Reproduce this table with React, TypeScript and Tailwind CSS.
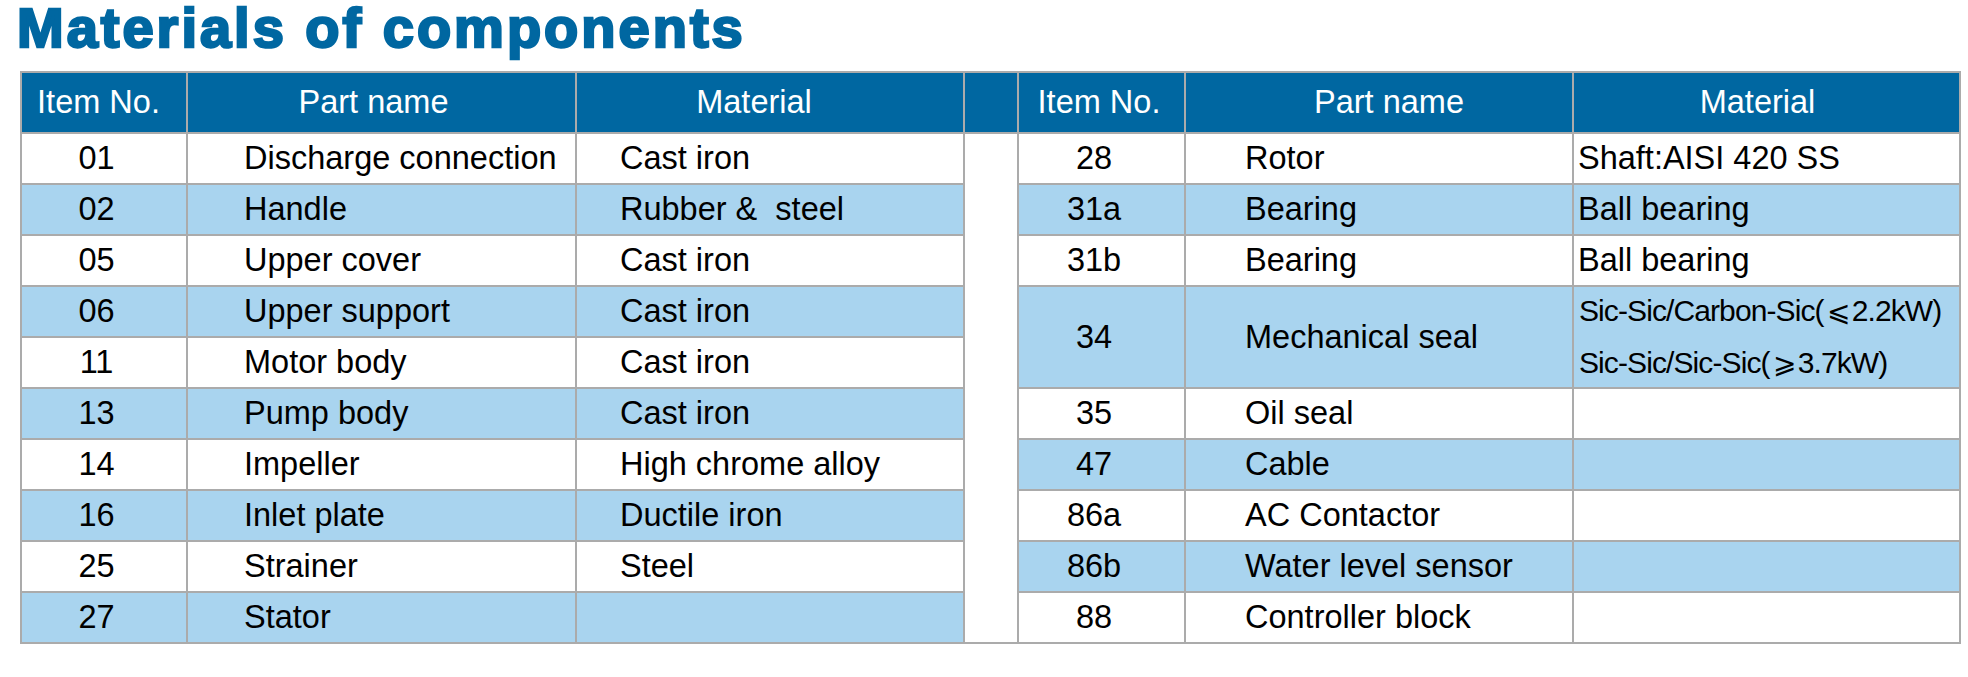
import React from 'react';

type Row = { no: string; part: string; material: string };

const leftRows: Row[] = [
  { no: '01', part: 'Discharge connection', material: 'Cast iron' },
  { no: '02', part: 'Handle', material: 'Rubber &\u00a0 steel' },
  { no: '05', part: 'Upper cover', material: 'Cast iron' },
  { no: '06', part: 'Upper support', material: 'Cast iron' },
  { no: '11', part: 'Motor body', material: 'Cast iron' },
  { no: '13', part: 'Pump body', material: 'Cast iron' },
  { no: '14', part: 'Impeller', material: 'High chrome alloy' },
  { no: '16', part: 'Inlet plate', material: 'Ductile iron' },
  { no: '25', part: 'Strainer', material: 'Steel' },
  { no: '27', part: 'Stator', material: '' },
];

// right side rows, indexed by the left row they start on; 34 spans two rows
const rightRows: (Row | null)[] = [
  { no: '28', part: 'Rotor', material: 'Shaft:AISI 420 SS' },
  { no: '31a', part: 'Bearing', material: 'Ball bearing' },
  { no: '31b', part: 'Bearing', material: 'Ball bearing' },
  { no: '34', part: 'Mechanical seal', material: 'seal' },
  null,
  { no: '35', part: 'Oil seal', material: '' },
  { no: '47', part: 'Cable', material: '' },
  { no: '86a', part: 'AC Contactor', material: '' },
  { no: '86b', part: 'Water level sensor', material: '' },
  { no: '88', part: 'Controller block', material: '' },
];

const head = 'bg-[#0067a1] text-white flex items-center justify-center';

export default function App() {
  return (
    <div className="min-h-screen bg-white font-['Liberation_Sans',Arial,sans-serif]">
      <h1 className="pl-[17px] text-[56px] leading-[56px] font-bold tracking-[3px] text-[#0067a1] [-webkit-text-stroke:2.5px_#0067a1]">
        Materials of components
      </h1>

      <div className="ml-[20px] mt-[15px] grid w-fit grid-cols-[164px_387px_386px_52px_165px_386px_385px] grid-rows-[59px_repeat(10,49px)] gap-[2px] bg-[#ababab] p-[2px] text-[32.5px] text-black">
        {/* Header */}
        <div className={`${head} pr-[11px]`}>Item No.</div>
        <div className={`${head} pr-[16px]`}>Part name</div>
        <div className={`${head} pr-[32px]`}>Material</div>
        <div className="bg-[#0067a1]" />
        <div className={`${head} pr-[5px]`}>Item No.</div>
        <div className={`${head} pl-[20px]`}>Part name</div>
        <div className={`${head} pr-[18px]`}>Material</div>

        {/* Spacer between the two halves */}
        <div className="col-start-4 row-start-2 row-span-10 bg-white" />

        {leftRows.map((row, i) => {
          const bg = i % 2 === 0 ? 'bg-white' : 'bg-[#a9d4ef]';
          const right = rightRows[i];
          const rbg = i < 4 ? bg : i % 2 === 0 ? 'bg-[#a9d4ef]' : 'bg-white';
          const seal = right?.no === '34';
          const span = seal ? 'row-span-2' : '';
          return (
            <React.Fragment key={row.no}>
              <div className={`${bg} flex items-center justify-center pr-[15px]`}>{row.no}</div>
              <div className={`${bg} flex items-center pl-[56px] whitespace-nowrap`}>{row.part}</div>
              <div className={`${bg} flex items-center pl-[43px] whitespace-nowrap`}>{row.material}</div>
              {right && (
                <>
                  <div className={`${rbg} ${span} flex items-center justify-center pr-[15px]`}>{right.no}</div>
                  <div className={`${rbg} ${span} flex items-center pl-[59px] whitespace-nowrap`}>{right.part}</div>
                  {seal ? (
                    <div className={`${rbg} ${span} flex flex-col justify-center pl-[5px] text-[30px] leading-[51px] tracking-[-0.9px] whitespace-nowrap`}>
                      <div>Sic-Sic/Carbon-Sic(<span className="mx-[3px] text-[28px]">⩽</span>2.2kW)</div>
                      <div>Sic-Sic/Sic-Sic(<span className="mx-[3px] text-[28px]">⩾</span>3.7kW)</div>
                    </div>
                  ) : (
                    <div className={`${rbg} flex items-center pl-[4px] whitespace-nowrap`}>{right.material}</div>
                  )}
                </>
              )}
            </React.Fragment>
          );
        })}
      </div>
    </div>
  );
}
